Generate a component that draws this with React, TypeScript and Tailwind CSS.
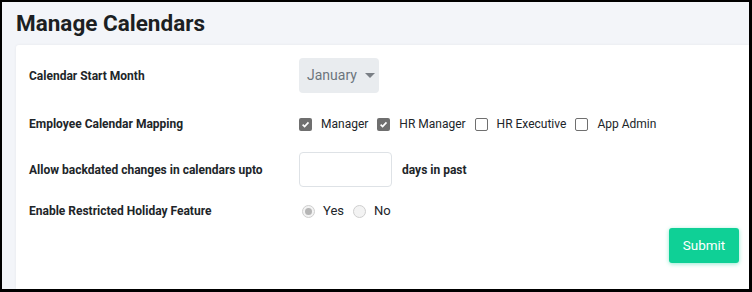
import React from 'react';

function Check({ checked }: { checked: boolean }) {
  if (checked) {
    return (
      <span className="flex h-[13px] w-[13px] items-center justify-center rounded-[2px] bg-[#6f6f6f]">
        <svg width="9" height="9" viewBox="0 0 10 10">
          <path d="M1.8 5.2 L4 7.4 L8.3 2.6" fill="none" stroke="#fff" strokeWidth="1.8" />
        </svg>
      </span>
    );
  }
  return <span className="h-[13px] w-[13px] rounded-[2px] border border-[#6f6f6f] bg-white" />;
}

function Radio({ checked }: { checked: boolean }) {
  return (
    <span className="flex h-[13px] w-[13px] items-center justify-center rounded-full border border-[#cfcfcf] bg-[#f3f3f3]">
      {checked && <span className="h-[7px] w-[7px] rounded-full bg-[#b5b5b5]" />}
    </span>
  );
}

export default function App() {
  const roles = [
    { name: 'Manager', on: true },
    { name: 'HR Manager', on: true },
    { name: 'HR Executive', on: false },
    { name: 'App Admin', on: false },
  ];
  return (
    <div
      className="flex h-[292px] w-[752px] flex-col border-b-[3px] border-l-2 border-r-[3px] border-t-2 border-black bg-[#f3f5f9] text-[#212529]"
      style={{ fontFamily: 'Roboto, "Liberation Sans", sans-serif' }}
    >
      <h1 className="ml-[14px] mt-[7px] h-[36px] text-[22.5px] font-bold leading-[28px] text-[#1c1f23]">Manage Calendars</h1>
      <div className="ml-[14px] flex flex-1 flex-col rounded-tl-[3px] bg-white pl-[13px] pt-[13px] shadow-[0_0_3px_rgba(0,0,0,0.06)]">
        <div className="flex items-center">
          <div className="w-[270px] text-[12px] font-bold">Calendar Start Month</div>
          <div className="flex h-[35px] w-[80px] items-center rounded-[4px] bg-[#e9ecef] pl-[8px] text-[14px] text-[#6c757d]">
            January
            <svg className="ml-[8px]" width="10" height="6" viewBox="0 0 10 6">
              <path d="M0 0 L10 0 L5 5 Z" fill="#7a7f85" />
            </svg>
          </div>
        </div>
        <div className="mt-[21px] flex h-[20px] items-center">
          <div className="w-[270px] text-[12px] font-bold">Employee Calendar Mapping</div>
          <div className="flex items-center text-[12px]">
            {roles.map((r) => (
              <label key={r.name} className="mr-[9px] flex items-center">
                <Check checked={r.on} />
                <span className="ml-[9px]">{r.name}</span>
              </label>
            ))}
          </div>
        </div>
        <div className="mt-[18px] flex items-center">
          <div className="w-[270px] text-[12px] font-bold">Allow backdated changes in calendars upto</div>
          <input className="h-[35px] w-[93px] rounded-[4px] border border-[#dee2e6] bg-white outline-none" />
          <span className="ml-[10px] text-[12px] font-bold">days in past</span>
        </div>
        <div className="mt-[14px] flex h-[20px] items-center">
          <div className="w-[270px] text-[12px] font-bold">Enable Restricted Holiday Feature</div>
          <div className="flex items-center pl-[3px] text-[13px]">
            <Radio checked />
            <span className="ml-[8px]">Yes</span>
            <span className="ml-[9px]">
              <Radio checked={false} />
            </span>
            <span className="ml-[8px]">No</span>
          </div>
        </div>
        <div className="mr-[10px] mt-[7px] flex justify-end">
          <button className="h-[35px] w-[70px] rounded-[3px] bg-[#0fd096] text-[13.5px] text-white shadow-[0_1px_4px_rgba(15,208,150,0.45)]">
            Submit
          </button>
        </div>
      </div>
    </div>
  );
}
